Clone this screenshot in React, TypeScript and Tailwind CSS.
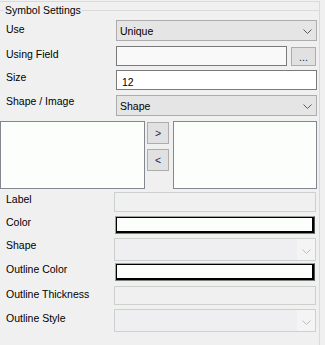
import React from "react";

function Chevron({ color }: { color: string }) {
  return (
    <svg width="9" height="5" viewBox="0 0 9 5" fill="none">
      <path d="M0.5 0.5L4.5 4.5L8.5 0.5" stroke={color} />
    </svg>
  );
}

function Combo({ value }: { value: string }) {
  return (
    <div className="w-[201px] flex items-center justify-between border border-[#acacac] bg-[#e5e5e5] pl-[3px] pr-[4px] pt-[1px]">
      <span>{value}</span>
      <Chevron color="#5a5a5a" />
    </div>
  );
}

function DisabledCombo() {
  return (
    <div className="w-[202px] flex border border-[#cdd1cd] bg-[#efeff1]">
      <div className="flex-1" />
      <div className="w-[18px] flex items-center justify-center bg-[#f4f4f5] pt-[3px]">
        <Chevron color="#bcbcbc" />
      </div>
    </div>
  );
}

function ColorBox() {
  return (
    <div className="ml-[1px] w-[200px] border border-t-[#a0a0a0] border-l-[#a0a0a0] border-r-[#505050] border-b-[#808080]">
      <div className="h-full bg-[#fcfefc] border-t border-l border-r-2 border-b-2 border-black" />
    </div>
  );
}

export default function App() {
  return (
    <div className="w-[325px] h-[345px] bg-[#f0f0f0] overflow-hidden font-['Liberation_Sans',Arial,sans-serif] text-[10.5px] leading-[12px] text-black">
      <div className="mt-px w-[320px] h-[344px] border-t border-r border-[#dadada]">
        <fieldset className="mt-[2px] border-t border-[#dadada]">
          <legend className="ml-[4px] px-[1px]">Symbol Settings</legend>

          <div className="mt-[4px] flex h-[21px]">
            <div className="w-[116px] pl-[6px] pt-[3px]">Use</div>
            <Combo value="Unique" />
          </div>

          <div className="mt-[5px] flex h-[20px]">
            <div className="w-[116px] pl-[6px] pt-[2px]">Using Field</div>
            <div className="w-[171px] border border-[#7a7a7a] bg-[#f9f9f9]" />
            <div className="ml-[4px] mt-[1px] w-[25px] h-[19px] flex items-end justify-center border border-[#adadad] bg-[#e1e1e1] pb-[2px] text-[#1a1a5a]">
              ...
            </div>
          </div>

          <div className="mt-[4px] flex h-[20px]">
            <div className="w-[116px] pl-[6px] pt-[1px]">Size</div>
            <div className="w-[201px] flex items-center border border-[#7a7a7a] bg-white pl-[5px] pt-[3px]">
              12
            </div>
          </div>

          <div className="mt-[5px] flex h-[21px]">
            <div className="w-[116px] pl-[6px]">Shape / Image</div>
            <Combo value="Shape" />
          </div>

          <div className="mt-[5px] flex h-[68px]">
            <div className="w-[145px] border border-[#828790] bg-[#fcfefc]" />
            <div className="ml-[2px] w-[22px] flex flex-col gap-[5px] pt-[1px]">
              <button className="h-[22px] flex items-center justify-center border border-[#adadad] bg-[#e1e1e1] text-[#1a1a5a]">
                &gt;
              </button>
              <button className="h-[22px] flex items-center justify-center border border-[#adadad] bg-[#e1e1e1] text-[#1a1a5a]">
                &lt;
              </button>
            </div>
            <div className="ml-[4px] w-[144px] border border-[#828790] bg-[#fcfefc]" />
          </div>

          <div className="mt-[3px] flex h-[20px]">
            <div className="w-[114px] pl-[6px] pt-[1px]">Label</div>
            <div className="w-[202px] border border-[#cdd1cd]" />
          </div>

          <div className="mt-[4px] flex h-[18px]">
            <div className="w-[114px] pl-[6px]">Color</div>
            <ColorBox />
          </div>

          <div className="mt-[4px] flex h-[23px]">
            <div className="w-[114px] pl-[6px] pt-[1px]">Shape</div>
            <DisabledCombo />
          </div>

          <div className="mt-[2px] flex h-[18px]">
            <div className="w-[114px] pl-[6px]">Outline Color</div>
            <ColorBox />
          </div>

          <div className="mt-[5px] flex h-[19px]">
            <div className="w-[114px] pl-[6px] pt-[2px]">Outline Thickness</div>
            <div className="w-[202px] border border-[#cdd1cd]" />
          </div>

          <div className="mt-[4px] flex h-[23px]">
            <div className="w-[114px] pl-[6px] pt-[3px]">Outline Style</div>
            <DisabledCombo />
          </div>
        </fieldset>
      </div>
    </div>
  );
}
